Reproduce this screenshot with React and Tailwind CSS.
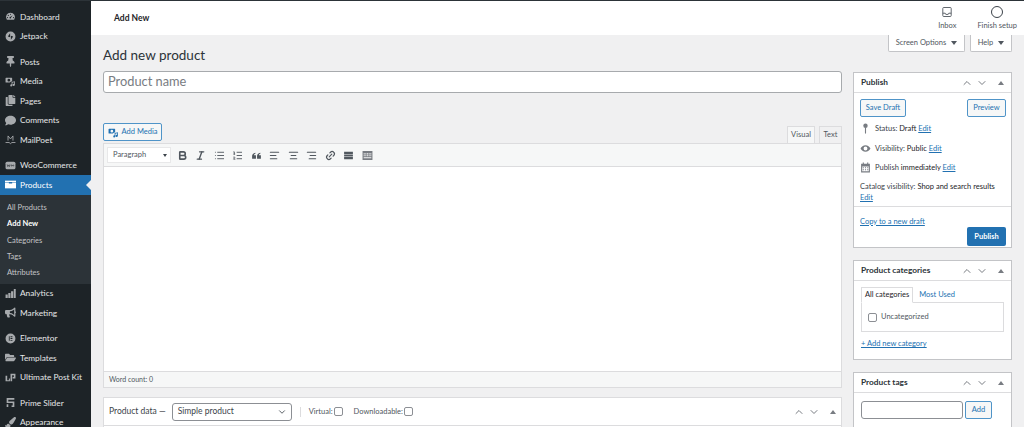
import { AlignCenter, AlignLeft, AlignRight, Bold, ChevronDown, ChevronUp, Italic, Link2, List, ListOrdered } from "lucide-react";
import { FaBullhorn, FaComment, FaCopy, FaFolderOpen, FaPaintBrush, FaThumbtack } from "react-icons/fa";

const font = "font-['Lato','Open_Sans',sans-serif]";

function MediaIcon({ className = "" }) {
  return (
    <svg viewBox="0 0 20 20" className={className} fill="currentColor">
      <path d="M2 3h10a1 1 0 0 1 1 1v6h-2l-2 2H2a1 1 0 0 1-1-1V4a1 1 0 0 1 1-1zm5 2a2.500 2.500 0 1 0 0 5 2.500 2.500 0 0 0 0-5z" fillRule="evenodd" />
      <path d="M12 11l6-1.500V16a2 2 0 1 1-1.500-1.900v-2.800l-3 .8V17a2 2 0 1 1-1.500-1.900z" />
    </svg>
  );
}

function Gauge({ className }) {
  return (
    <svg viewBox="0 0 20 20" className={className} fill="currentColor">
      <path fillRule="evenodd" d="M10 3a8 8 0 0 0-7 12l.6 1h12.800l.6-1A8 8 0 0 0 10 3zm0 2a1 1 0 1 1 0 2 1 1 0 0 1 0-2zM6 7a1 1 0 1 1 0 2 1 1 0 0 1 0-2zm8 .5L11 12a1.500 1.500 0 1 1-1.500-1.200zM4.500 11a1 1 0 1 1 0 2 1 1 0 0 1 0-2zm11 0a1 1 0 1 1 0 2 1 1 0 0 1 0-2z" />
    </svg>
  );
}

function Jetpack({ className }) {
  return (
    <svg viewBox="0 0 20 20" className={className} fill="currentColor">
      <path fillRule="evenodd" d="M10 1a9 9 0 1 0 0 18 9 9 0 0 0 0-18zM9.300 4v7.500L5.200 10zM10.700 16V8.500l4.100 1.500z" />
    </svg>
  );
}

function MailPoet({ className }) {
  return (
    <svg viewBox="0 0 20 20" className={className} fill="none" stroke="currentColor" strokeWidth="1.600">
      <path d="M5.500 12V3.500L10 9l4.500-5.500V12" />
      <path d="M1 15.500h6.500L10 17.500l2.500-2h6.500" />
    </svg>
  );
}

function Woo({ className }) {
  return (
    <svg viewBox="0 0 20 20" className={className}>
      <rect x="1" y="3" width="18" height="14" rx="3" fill="#a7aaad" />
      <path d="M4 8l1 4 1.500-3 1.500 3 1-4M11 10a1 1 0 1 0 2 0 1 1 0 1 0-2 0M14 10a1 1 0 1 0 2 0 1 1 0 1 0-2 0" fill="none" stroke="#1d2327" strokeWidth="1" />
    </svg>
  );
}

function Box({ className }) {
  return (
    <svg viewBox="0 0 20 20" className={className} fill="currentColor">
      <path d="M0 3h20v14H0z" />
      <path d="M0 6.500h7v1.500h6V6.500h7V5.500H0z" fill="#2271b1" />
    </svg>
  );
}

function Bars({ className }) {
  return (
    <svg viewBox="0 0 20 20" className={className} fill="currentColor">
      <path d="M1 12h4v6H1zM6 9h4v9H6zM11 6h4v12h-4zM16 2h3.500v16H16z" />
    </svg>
  );
}

function Elementor({ className }) {
  return (
    <svg viewBox="0 0 20 20" className={className} fill="currentColor">
      <path fillRule="evenodd" d="M10 1a9 9 0 1 0 0 18 9 9 0 0 0 0-18zM7 6h1.500v8H7zm3 0h3.500v1.500H10zm0 3.200h3.500v1.500H10zm0 3.300h3.500V14H10z" />
    </svg>
  );
}

function PostKit({ className }) {
  return (
    <svg viewBox="0 0 20 20" className={className} fill="currentColor">
      <path d="M1 7h3v8h3v-3h2v5H1zM10 3h9v9h-5V9h2V6h-3v11h-3z" />
    </svg>
  );
}

function PrimeSlider({ className }) {
  return (
    <svg viewBox="0 0 20 20" className={className} fill="currentColor">
      <path d="M3 2h14v3H6v3h11v10h-5v-2.500h2V11H3zM3 13h3v5H3z" />
    </svg>
  );
}

const menuGroups = [
  [
    { label: "Dashboard", Icon: Gauge },
    { label: "Jetpack", Icon: Jetpack },
  ],
  [
    { label: "Posts", Icon: FaThumbtack },
    { label: "Media", Icon: MediaIcon },
    { label: "Pages", Icon: FaCopy },
    { label: "Comments", Icon: FaComment },
    { label: "MailPoet", Icon: MailPoet },
  ],
  [
    { label: "WooCommerce", Icon: Woo },
    { label: "Products", Icon: Box, active: true },
    { label: "Analytics", Icon: Bars },
    { label: "Marketing", Icon: FaBullhorn },
  ],
  [
    { label: "Elementor", Icon: Elementor },
    { label: "Templates", Icon: FaFolderOpen },
    { label: "Ultimate Post Kit", Icon: PostKit },
  ],
  [
    { label: "Prime Slider", Icon: PrimeSlider },
    { label: "Appearance", Icon: FaPaintBrush },
  ],
];

const subMenu = ["All Products", "Add New", "Categories", "Tags", "Attributes"];

function MenuItem({ item }) {
  const { label, Icon, active } = item;
  return (
    <div className={`relative flex h-[19.5px] items-center pl-[5px] text-[8.300px] ${active ? "bg-[#2271b1] text-white" : "text-[#e6e7e8]"}`}>
      <Icon className={`h-[11px] w-[11px] shrink-0 ${active ? "text-white" : "text-[#a7aaad]"}`} />
      <span className="ml-[4px] whitespace-nowrap">{label}</span>
      {active && <span className="absolute right-0 top-[5px] h-0 w-0 border-y-[5px] border-r-[5px] border-y-transparent border-r-[#f0f0f1]" />}
    </div>
  );
}

function Sidebar() {
  return (
    <aside className="flex h-full w-[91px] shrink-0 flex-col bg-[#1d2327] pt-[6px]">
      {menuGroups.map((group, i) => (
        <div key={i} className={i > 0 ? "mt-[6px]" : ""}>
          {group.map((item) => (
            <div key={item.label}>
              <MenuItem item={item} />
              {item.active && (
                <div className="flex h-[89px] flex-col bg-[#2c3338] pl-[7px] pt-[5px]">
                  {subMenu.map((s) => (
                    <div key={s} className={`flex h-[16.300px] items-center text-[7.500px] ${s === "Add New" ? "font-bold text-white" : "text-[#c3c4c7]"}`}>
                      {s}
                    </div>
                  ))}
                </div>
              )}
            </div>
          ))}
        </div>
      ))}
    </aside>
  );
}

function TopBar() {
  return (
    <header className="flex h-[34px] shrink-0 items-center justify-between bg-white pl-[23px] pr-[7px]">
      <span className="text-[8.500px] font-bold text-[#1d2327]">Add New</span>
      <div className="flex items-start gap-[21px] pt-[1px] text-[7.500px] text-[#50575e]">
        <div className="flex flex-col items-center">
          <svg viewBox="0 0 20 20" className="h-[12px] w-[12px]" fill="none" stroke="#50575e" strokeWidth="1.500">
            <rect x="3" y="2.500" width="14" height="15" rx="1.500" />
            <path d="M3 12h4l1 2h4l1-2h4" />
          </svg>
          <span className="mt-[3px] leading-[10px]">Inbox</span>
        </div>
        <div className="flex flex-col items-center">
          <span className="h-[12px] w-[12px] rounded-full border-[1.500px] border-[#3c434a]" />
          <span className="mt-[3px] leading-[10px]">Finish setup</span>
        </div>
      </div>
    </header>
  );
}

function Caret() {
  return <span className="ml-[5px] inline-block h-0 w-0 border-x-[3px] border-t-[4px] border-x-transparent border-t-[#50575e]" />;
}

function ToolBtn({ children }) {
  return <span className="flex w-[18.500px] justify-center text-[#50575e]">{children}</span>;
}

function EditorToolbar() {
  const cls = "h-[11px] w-[11px]";
  return (
    <div className="flex h-[23px] items-center border-b border-[#dcdcde] bg-[#f6f7f7] pl-[3px]">
      <div className="mr-[2px] flex h-[16px] w-[64px] items-center justify-between border border-[#e8e8e9] bg-white pl-[5px] pr-[3px] text-[7.500px] text-[#50575e]">
        Paragraph
        <span className="h-0 w-0 border-x-[2.500px] border-t-[3px] border-x-transparent border-t-[#3c434a]" />
      </div>
      <ToolBtn><Bold className={cls} strokeWidth={3.500} /></ToolBtn>
      <ToolBtn><Italic className={cls} strokeWidth={3} /></ToolBtn>
      <ToolBtn><List className={cls} strokeWidth={2} /></ToolBtn>
      <ToolBtn><ListOrdered className={cls} strokeWidth={2} /></ToolBtn>
      <ToolBtn>
        <svg viewBox="0 0 20 20" className={cls} fill="currentColor">
          <path d="M2 11c0-3 2-5 6-6v2c-2 .5-2.500 1.500-2.500 2.500H9V16H2zM11 11c0-3 2-5 6-6v2c-2 .5-2.500 1.500-2.500 2.500H18V16h-7z" />
        </svg>
      </ToolBtn>
      <ToolBtn><AlignLeft className={cls} strokeWidth={2.500} /></ToolBtn>
      <ToolBtn><AlignCenter className={cls} strokeWidth={2.500} /></ToolBtn>
      <ToolBtn><AlignRight className={cls} strokeWidth={2.500} /></ToolBtn>
      <ToolBtn><Link2 className={`${cls} -rotate-45`} strokeWidth={2.500} /></ToolBtn>
      <ToolBtn>
        <svg viewBox="0 0 20 20" className={cls} fill="currentColor">
          <path d="M2 3h16v5H2zM2 12h16v5H2zM2 9.300h16v1.400H2z" />
        </svg>
      </ToolBtn>
      <ToolBtn>
        <svg viewBox="0 0 20 20" className={`${cls} text-[#787c82]`} fill="currentColor">
          <path fillRule="evenodd" d="M1 2h18v16H1zM3 6v2h2V6zm3 0v2h2V6zm3 0v2h2V6zm3 0v2h2V6zm3 0v2h2V6zM3 9.500v2h2v-2zm3 0v2h2v-2zm3 0v2h2v-2zm3 0v2h2v-2zm3 0v2h2v-2zM3 13v2h14v-2z" />
        </svg>
      </ToolBtn>
    </div>
  );
}

function Checkbox() {
  return <span className="inline-block h-[9px] w-[9px] rounded-[2px] border border-[#8c8f94] bg-white" />;
}

function BoxControls() {
  return (
    <div className="flex items-center gap-[3px] text-[#787c82]">
      <ChevronUp className="h-[12px] w-[12px]" strokeWidth={2} />
      <ChevronDown className="h-[12px] w-[12px]" strokeWidth={2} />
      <span className="ml-[7px] mr-[3px] h-0 w-0 border-x-[3px] border-b-[4px] border-x-transparent border-b-[#787c82]" />
    </div>
  );
}

function MetaBox({ title, children, className = "" }) {
  return (
    <section className={`border border-[#c3c4c7] bg-white ${className}`}>
      <div className="flex h-[20px] items-center justify-between border-b border-[#dcdcde] pl-[7px] pr-[4px]">
        <h2 className="text-[8.300px] font-bold text-[#2c3338]">{title}</h2>
        <BoxControls />
      </div>
      {children}
    </section>
  );
}

function OutlineBtn({ children, className = "" }) {
  return (
    <span className={`flex items-center justify-center rounded-[2px] border border-[#4f94c8] bg-[#f6f7f7] text-[7.500px] text-[#2271b1] ${className}`}>
      {children}
    </span>
  );
}

function EditLink({ children = "Edit" }) {
  return <a className="text-[7.500px] text-[#2271b1] underline">{children}</a>;
}

function PublishBox() {
  const row = "flex h-[19.500px] items-center text-[7.500px] text-[#3c434a]";
  return (
    <MetaBox title="Publish" className="h-[176px]">
      <div className="pl-[6px] pr-[5px] pt-[6px]">
        <div className="flex justify-between">
          <OutlineBtn className="h-[18px] w-[46px]">Save Draft</OutlineBtn>
          <OutlineBtn className="h-[18px] w-[39px]">Preview</OutlineBtn>
        </div>
        <div className="mt-[2px]">
          <div className={row}>
            <svg viewBox="0 0 20 20" className="mr-[4px] h-[11px] w-[11px] text-[#787c82]" fill="currentColor">
              <circle cx="10" cy="5" r="4" />
              <path d="M9 8h2v10l-1 2-1-2z" />
            </svg>
            <span>Status: <span className="text-[#1d2327]">Draft</span> <EditLink /></span>
          </div>
          <div className={row}>
            <svg viewBox="0 0 20 20" className="mr-[4px] h-[11px] w-[11px] text-[#787c82]" fill="currentColor">
              <path fillRule="evenodd" d="M10 4c4 0 7.500 3 9 6-1.500 3-5 6-9 6s-7.500-3-9-6c1.500-3 5-6 9-6zm0 2.500a3.500 3.500 0 1 0 0 7 3.500 3.500 0 0 0 0-7z" />
            </svg>
            <span>Visibility: <span className="text-[#1d2327]">Public</span> <EditLink /></span>
          </div>
          <div className={row}>
            <svg viewBox="0 0 20 20" className="mr-[4px] h-[11px] w-[11px] text-[#787c82]" fill="currentColor">
              <path fillRule="evenodd" d="M5 1h2v2h6V1h2v2h3v16H2V3h3zM4 8v9h12V8zm1 1.500h2v2H5zm4 0h2v2H9zm4 0h2v2h-2zM5 13h2v2H5zm4 0h2v2H9zm4 0h2v2h-2z" />
            </svg>
            <span>Publish <span className="text-[#1d2327]">immediately</span> <EditLink /></span>
          </div>
          <div className="mt-[3px] text-[7.500px] leading-[11px] text-[#3c434a]">
            Catalog visibility: <span className="text-[#1d2327]">Shop and search results</span>
            <br />
            <EditLink />
          </div>
        </div>
      </div>
      <div className="mt-[3px] border-t border-[#dcdcde] pl-[6px] pr-[5px] pt-[5px] leading-[11px]">
        <EditLink>Copy to a new draft</EditLink>
        <div className="flex justify-end">
          <span className="flex h-[19px] w-[39px] items-center justify-center rounded-[2px] bg-[#2271b1] text-[7.500px] font-bold text-white">Publish</span>
        </div>
      </div>
    </MetaBox>
  );
}

function CategoriesBox() {
  return (
    <MetaBox title="Product categories" className="mt-[12px] h-[100px]">
      <div className="px-[7px] pt-[6px] text-[7.500px]">
        <div className="relative z-10 flex">
          <span className="flex h-[16px] items-center border border-b-white border-[#dcdcde] bg-white px-[3px] text-[#1d2327]">All categories</span>
          <span className="flex h-[16px] items-center px-[6px] text-[#2271b1]">Most Used</span>
        </div>
        <div className="-mt-px flex h-[30px] items-center gap-[4px] border border-[#dcdcde] pl-[6px] text-[#50575e]">
          <Checkbox />
          Uncategorized
        </div>
        <div className="mt-[6px]"><EditLink>+ Add new category</EditLink></div>
      </div>
    </MetaBox>
  );
}

function TagsBox() {
  return (
    <MetaBox title="Product tags" className="mt-[12px] h-[80px]">
      <div className="flex items-center gap-[2px] pl-[7px] pt-[8px]">
        <span className="h-[18px] w-[102px] rounded-[3px] border border-[#8c8f94] bg-white" />
        <OutlineBtn className="h-[18px] w-[27px]">Add</OutlineBtn>
      </div>
    </MetaBox>
  );
}

export default function App() {
  return (
    <div className={`flex h-[427px] w-[1024px] flex-col overflow-hidden bg-[#f0f0f1] ${font}`}>
      <div className="h-px shrink-0 bg-[#2c3338]" />
      <div className="flex min-h-0 flex-1">
        <Sidebar />
        <div className="flex min-w-0 flex-1 flex-col">
          <TopBar />
          <div className="flex flex-1 pl-[12px] pr-[12px]">
            <main className="w-[739px] shrink-0">
              <h1 className="mt-[10px] h-[20px] text-[13.500px] leading-[20px] text-[#2c3338]">Add new product</h1>
              <div className="mt-[6px] flex h-[22px] items-center rounded-[3px] border border-[#a7aaad] bg-white pb-px pl-[4px] text-[12.800px] text-[#787c82]">
                Product name
              </div>
              <div className="mt-[30px] flex h-[20px] items-start justify-between">
                <span className="flex h-[18px] w-[59px] items-center justify-center gap-[3px] rounded-[2px] border border-[#4f94c8] bg-[#f6f7f7] text-[7.500px] text-[#2271b1]">
                  <MediaIcon className="h-[11px] w-[11px]" />
                  Add Media
                </span>
                <div className="flex h-[20px] items-end gap-[4px] text-[7.500px] text-[#50575e]">
                  <span className="flex h-[17px] w-[28px] items-center justify-center border border-b-0 border-[#dcdcde] bg-[#f6f7f7]">Visual</span>
                  <span className="flex h-[17px] w-[23px] items-center justify-center border border-b-0 border-[#dcdcde] bg-[#f0f0f1]">Text</span>
                </div>
              </div>
              <div className="border border-[#dcdcde] bg-white">
                <EditorToolbar />
                <div className="h-[204px] bg-white" />
                <div className="flex h-[16px] items-center border-t border-[#dcdcde] bg-[#f6f7f7] pl-[5px] text-[7px] text-[#50575e]">Word count: 0</div>
              </div>
              <section className="mt-[9px] h-[40px] border border-[#dcdcde] bg-white">
                <div className="flex h-[28px] items-center border-b border-[#dcdcde] pl-[5px] text-[#3c434a]">
                  <span className="text-[8.500px]">Product data —</span>
                  <span className="ml-[6px] flex h-[18px] w-[120px] items-center justify-between rounded-[3px] border border-[#8c8f94] bg-white pl-[5px] pr-[4px] text-[8.500px]">
                    Simple product
                    <ChevronDown className="h-[10px] w-[10px]" strokeWidth={2} />
                  </span>
                  <span className="ml-[8px] h-[10px] w-px bg-[#dcdcde]" />
                  <span className="ml-[8px] flex items-center gap-[1px] text-[7.500px] text-[#50575e]">Virtual: <Checkbox /></span>
                  <span className="ml-[11px] flex items-center gap-[1px] text-[7.500px] text-[#50575e]">Downloadable: <Checkbox /></span>
                  <div className="ml-auto pr-[2px]"><BoxControls /></div>
                </div>
              </section>
            </main>
            <aside className="ml-[11px] w-[159px] shrink-0">
              <div className="flex justify-end gap-[5px] text-[7.500px] text-[#50575e]">
                <span className="flex h-[17px] w-[77px] items-center justify-center rounded-b-[2px] border border-t-0 border-[#c3c4c7] bg-white">Screen Options<Caret /></span>
                <span className="flex h-[17px] w-[42px] items-center justify-center rounded-b-[2px] border border-t-0 border-[#c3c4c7] bg-white">Help<Caret /></span>
              </div>
              <div className="mt-[20px]">
                <PublishBox />
              </div>
              <CategoriesBox />
              <TagsBox />
            </aside>
          </div>
        </div>
      </div>
    </div>
  );
}
